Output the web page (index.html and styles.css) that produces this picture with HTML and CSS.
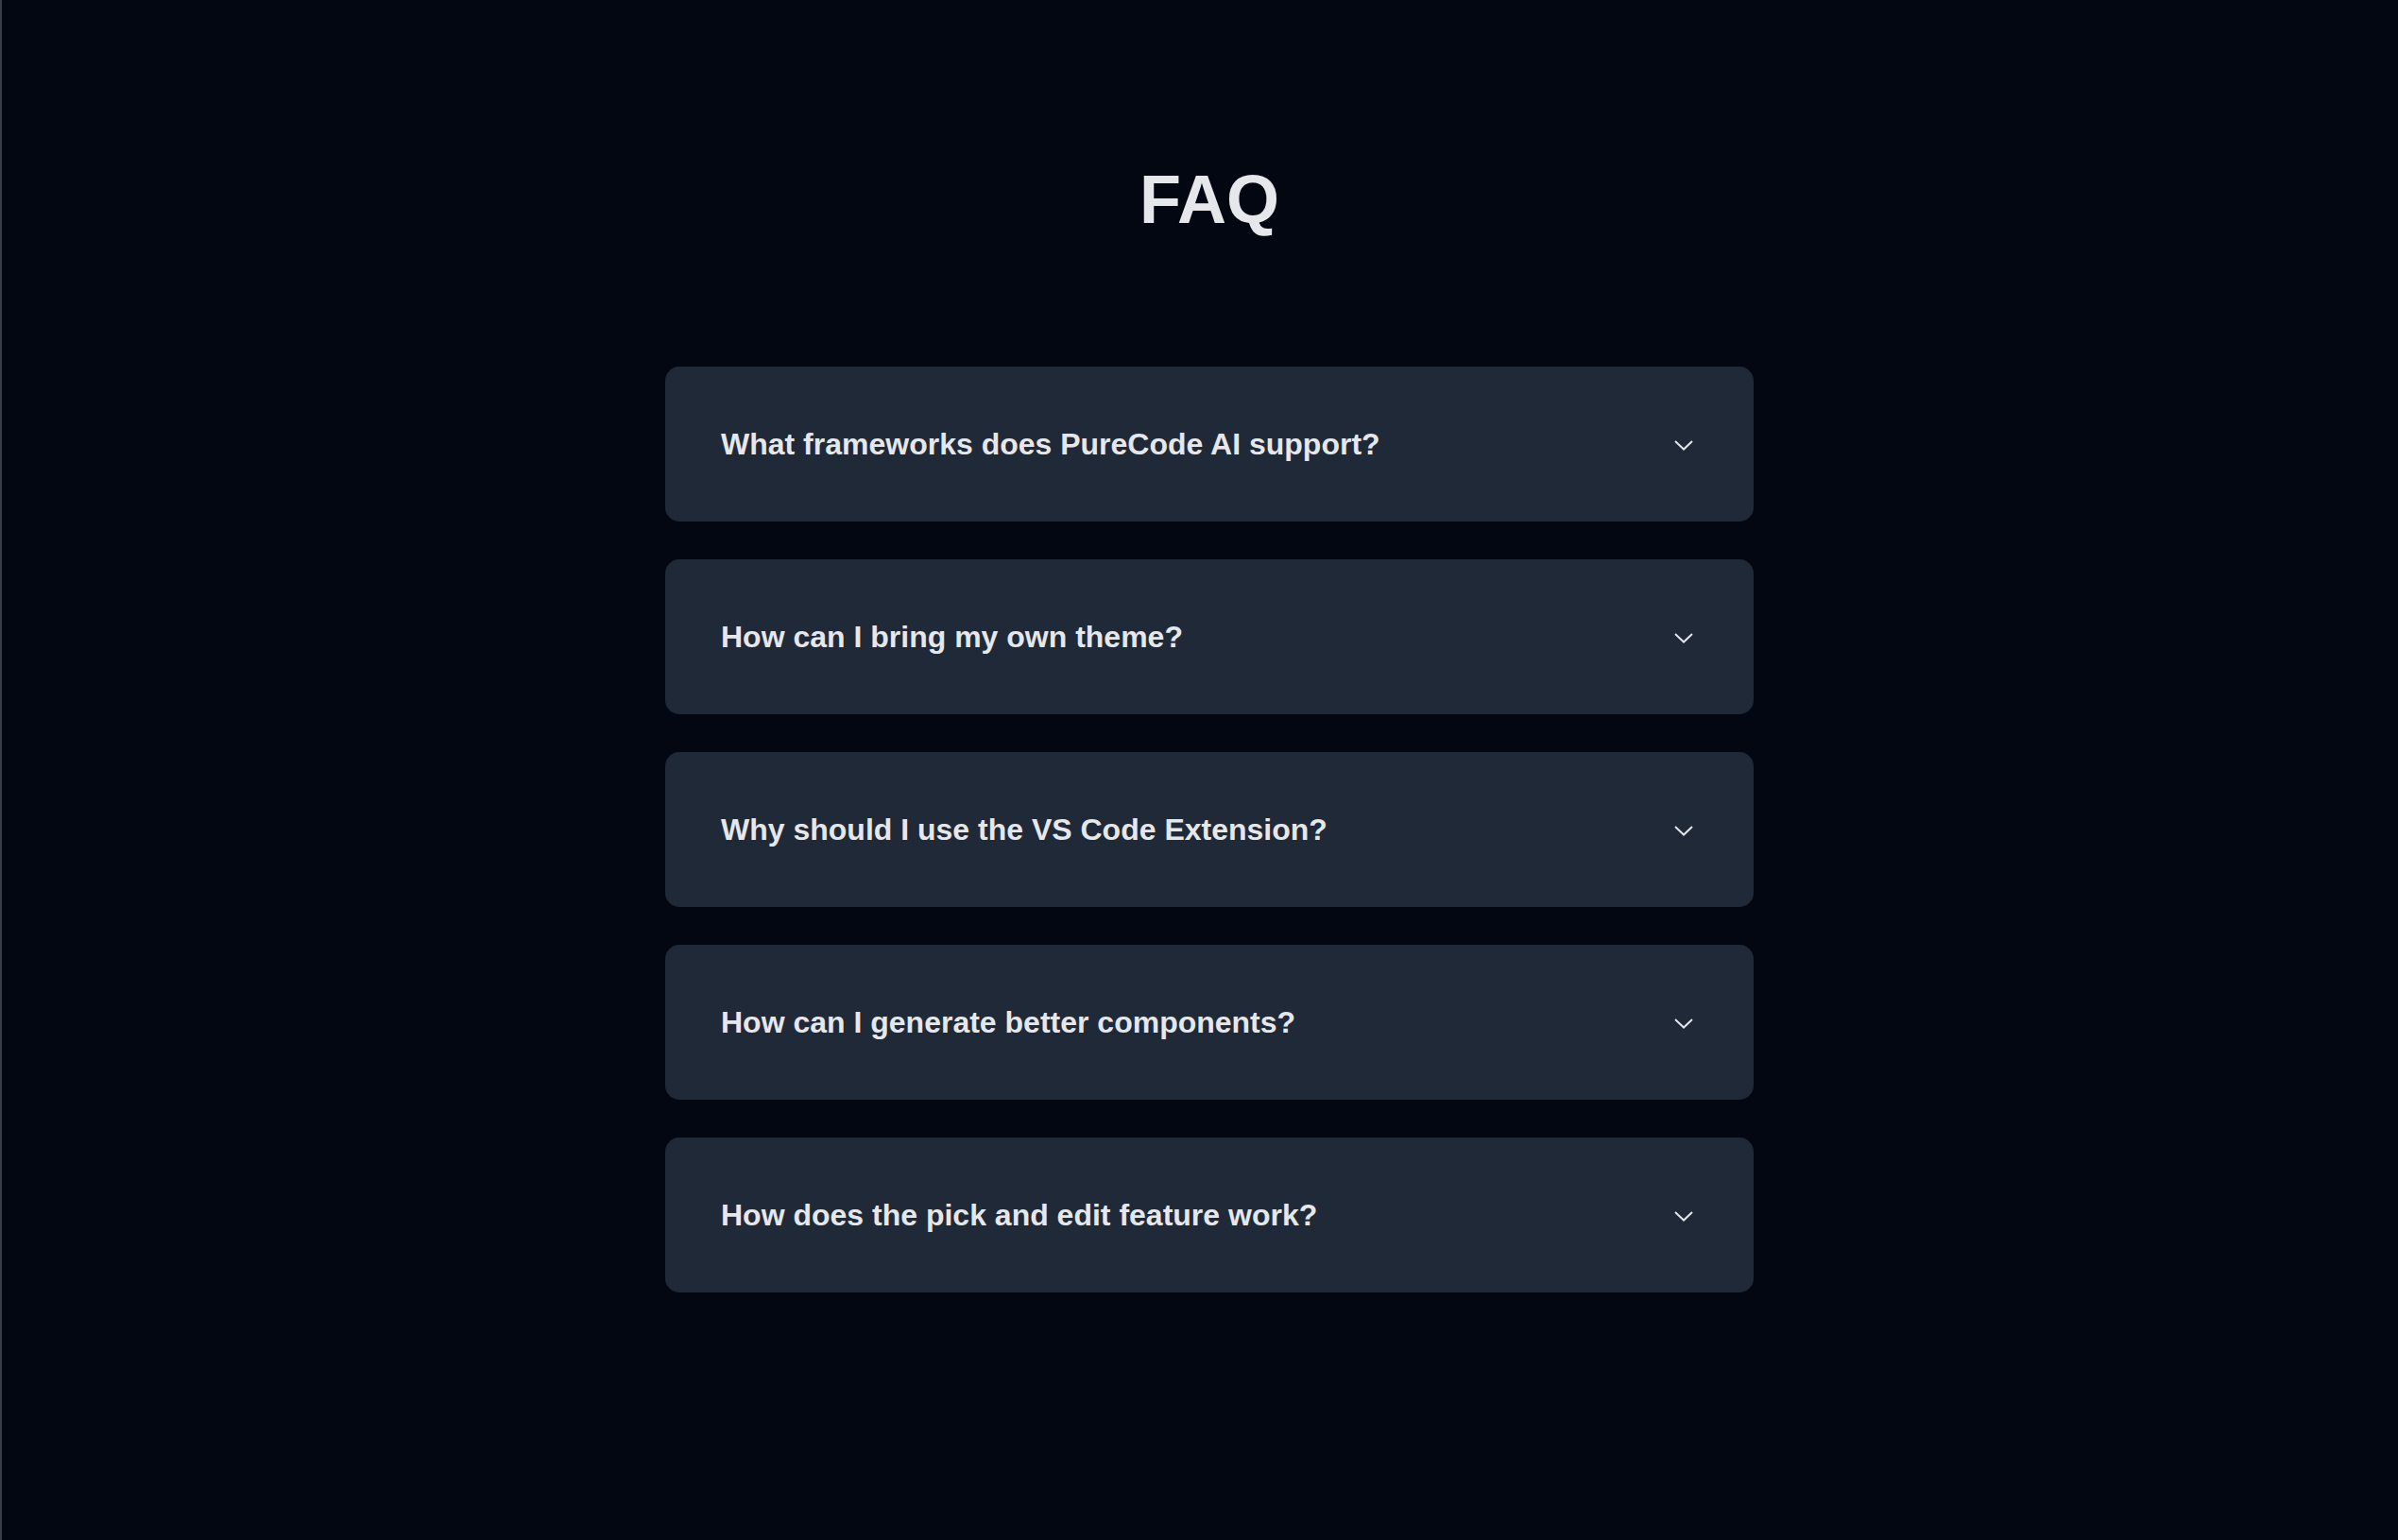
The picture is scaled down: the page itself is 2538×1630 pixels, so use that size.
FILE: index.html
```html
<!DOCTYPE html>
<html lang="en">
<head>
<meta charset="utf-8">
<title>FAQ</title>
<link rel="stylesheet" href="styles.css">
</head>
<body>
<main class="page">
  <h1 class="title">FAQ</h1>
  <div class="faq-list">
    <div class="faq-item">
      <span class="question">What frameworks does PureCode AI support?</span>
      <svg class="chevron" width="20" height="11" viewBox="0 0 20 11"><polyline points="1,1 10,9.5 19,1" fill="none" stroke="#e5e7eb" stroke-width="2"/></svg>
    </div>
    <div class="faq-item">
      <span class="question">How can I bring my own theme?</span>
      <svg class="chevron" width="20" height="11" viewBox="0 0 20 11"><polyline points="1,1 10,9.5 19,1" fill="none" stroke="#e5e7eb" stroke-width="2"/></svg>
    </div>
    <div class="faq-item">
      <span class="question">Why should I use the VS Code Extension?</span>
      <svg class="chevron" width="20" height="11" viewBox="0 0 20 11"><polyline points="1,1 10,9.5 19,1" fill="none" stroke="#e5e7eb" stroke-width="2"/></svg>
    </div>
    <div class="faq-item">
      <span class="question">How can I generate better components?</span>
      <svg class="chevron" width="20" height="11" viewBox="0 0 20 11"><polyline points="1,1 10,9.5 19,1" fill="none" stroke="#e5e7eb" stroke-width="2"/></svg>
    </div>
    <div class="faq-item">
      <span class="question">How does the pick and edit feature work?</span>
      <svg class="chevron" width="20" height="11" viewBox="0 0 20 11"><polyline points="1,1 10,9.5 19,1" fill="none" stroke="#e5e7eb" stroke-width="2"/></svg>
    </div>
  </div>
</main>
</body>
</html>
```

FILE: styles.css
```css
html, body {
  margin: 0;
  padding: 0;
  background: #030712;
}
body {
  min-height: 1630px;
  border-left: 2px solid #3a3e4c;
  box-sizing: border-box;
  font-family: "Liberation Sans", Arial, sans-serif;
  color: #e5e7eb;
}
.page {
  padding: 175px 0 0 20px;
  display: flex;
  flex-direction: column;
  align-items: center;
}
.title {
  margin: 0;
  font-size: 72px;
  line-height: 72px;
  font-weight: 700;
  color: #e5e7eb;
}
.faq-list {
  margin-top: 141px;
  width: 1152px;
  display: flex;
  flex-direction: column;
  gap: 40px;
}
.faq-item {
  height: 164px;
  box-sizing: border-box;
  background: #1f2937;
  border-radius: 15px;
  padding: 0 64px 0 59px;
  display: flex;
  align-items: center;
  justify-content: space-between;
}
.question {
  font-size: 32px;
  font-weight: 700;
  line-height: 40px;
  color: #e5e7eb;
}
.chevron {
  display: block;
  margin-top: 2px;
}
```
